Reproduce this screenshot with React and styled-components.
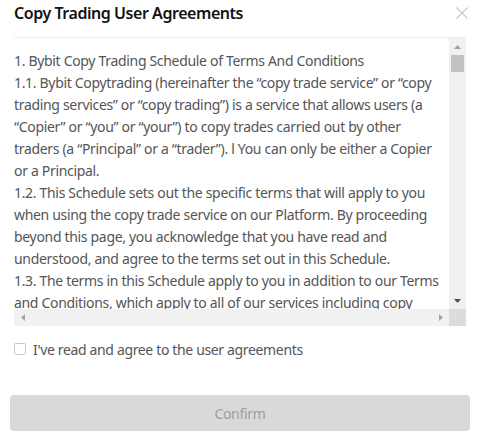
import React from "react";
import styled, { createGlobalStyle } from "styled-components";

const Global = createGlobalStyle`
  html, body { margin: 0; padding: 0; background: #fff; }
  body { font-family: "Noto Sans", "Open Sans", Arial, sans-serif; }
  * { box-sizing: border-box; }
`;

const Modal = styled.div`
  width: 479px;
  height: 441px;
  display: flex;
  flex-direction: column;
  background: #fff;
`;

const Header = styled.div`
  height: 37px;
  padding: 2px 11px 0 14px;
  display: flex;
  justify-content: space-between;
  align-items: flex-start;
`;

const Title = styled.h2`
  margin: 0;
  font-size: 16px;
  line-height: 22px;
  font-weight: 600;
  letter-spacing: -0.45px;
  color: #121214;
`;

const Close = styled.button`
  border: 0;
  background: none;
  padding: 0;
  margin-top: 5px;
  width: 12px;
  height: 12px;
  display: flex;
  cursor: pointer;
`;

const Body = styled.div`
  padding: 0 13px 0 14px;
`;

const Frame = styled.div`
  border-top: 1px solid #ebebeb;
  height: 289px;
  display: grid;
  grid-template-columns: 1fr 17px;
  grid-template-rows: 1fr 17px;
`;

const Content = styled.div`
  overflow: hidden;
  padding-top: 12px;
  font-size: 14px;
  line-height: 22px;
  letter-spacing: -0.32px;
  color: #555;
  white-space: nowrap;
`;

const VBar = styled.div`
  background: #f1f1f1;
  display: flex;
  flex-direction: column;
`;

const HBar = styled.div`
  background: #f1f1f1;
  display: flex;
  justify-content: space-between;
`;

const Corner = styled.div`
  background: #dcdcdc;
`;

const ArrowBtn = styled.div`
  width: 17px;
  height: 17px;
  flex: none;
  display: flex;
  align-items: center;
  justify-content: center;
`;

const Track = styled.div`
  flex: 1;
  padding: 0 2px;
`;

const Thumb = styled.div`
  height: 17px;
  background: #c1c1c1;
`;

const CheckRow = styled.label`
  margin: 12px 0 0;
  padding: 0 14px;
  height: 22px;
  display: flex;
  align-items: center;
  gap: 7px;
  font-size: 14px;
  letter-spacing: -0.35px;
  color: #555;
  cursor: pointer;
`;

const Box = styled.span`
  width: 12px;
  height: 12px;
  border: 1px solid #c9c9c9;
  border-radius: 2px;
  background: #fff;
  flex: none;
`;

const Footer = styled.div`
  margin-top: 35px;
  padding: 0 9px 0 10px;
`;

const Confirm = styled.button`
  width: 100%;
  height: 36px;
  border: 0;
  border-radius: 4px;
  background: #d9d9d9;
  color: #9e9e9e;
  font-family: inherit;
  font-size: 14px;
  letter-spacing: -0.3px;
  cursor: not-allowed;
`;

const Tri = ({ dir, color }) => {
  const pts = {
    up: "0,4 3.5,0 7,4",
    down: "0,0 7,0 3.5,4",
    left: "4,0 4,7 0,3.5",
    right: "0,0 4,3.5 0,7",
  }[dir];
  const vert = dir === "up" || dir === "down";
  return (
    <svg width={vert ? 7 : 4} height={vert ? 4 : 7} viewBox={vert ? "0 0 7 4" : "0 0 4 7"}>
      <polygon points={pts} fill={color} />
    </svg>
  );
};

const lines = [
  "1. Bybit Copy Trading Schedule of Terms And Conditions",
  "1.1. Bybit Copytrading (hereinafter the \u201ccopy trade service\u201d or \u201ccopy",
  "trading services\u201d or \u201ccopy trading\u201d) is a service that allows users (a",
  "\u201cCopier\u201d or \u201cyou\u201d or \u201cyour\u201d) to copy trades carried out by other",
  "traders (a \u201cPrincipal\u201d or a \u201ctrader\u201d). l You can only be either a Copier",
  "or a Principal.",
  "1.2. This Schedule sets out the specific terms that will apply to you",
  "when using the copy trade service on our Platform. By proceeding",
  "beyond this page, you acknowledge that you have read and",
  "understood, and agree to the terms set out in this Schedule.",
  "1.3. The terms in this Schedule apply to you in addition to our Terms",
  "and Conditions, which apply to all of our services including copy",
  "trading. In the event of any conflict between this Schedule and our",
  "Terms and Conditions, this Schedule shall prevail.",
];

export default function App() {
  return (
    <>
      <Global />
      <Modal>
        <Header>
          <Title>Copy Trading User Agreements</Title>
          <Close aria-label="close">
            <svg width="12" height="12" viewBox="0 0 12 12">
              <path d="M0.5 0.5L11.5 11.5M11.5 0.5L0.5 11.5" stroke="#c8c8c8" strokeWidth="1.1" />
            </svg>
          </Close>
        </Header>
        <Body>
          <Frame>
            <Content>
              {lines.map((l, i) => (
                <div key={i}>{l}</div>
              ))}
            </Content>
            <VBar>
              <ArrowBtn><Tri dir="up" color="#a3a3a3" /></ArrowBtn>
              <Track><Thumb /></Track>
              <ArrowBtn><Tri dir="down" color="#505050" /></ArrowBtn>
            </VBar>
            <HBar>
              <ArrowBtn><Tri dir="left" color="#a3a3a3" /></ArrowBtn>
              <ArrowBtn><Tri dir="right" color="#a3a3a3" /></ArrowBtn>
            </HBar>
            <Corner />
          </Frame>
        </Body>
        <CheckRow>
          <Box />
          I've read and agree to the user agreements
        </CheckRow>
        <Footer>
          <Confirm disabled>Confirm</Confirm>
        </Footer>
      </Modal>
    </>
  );
}
